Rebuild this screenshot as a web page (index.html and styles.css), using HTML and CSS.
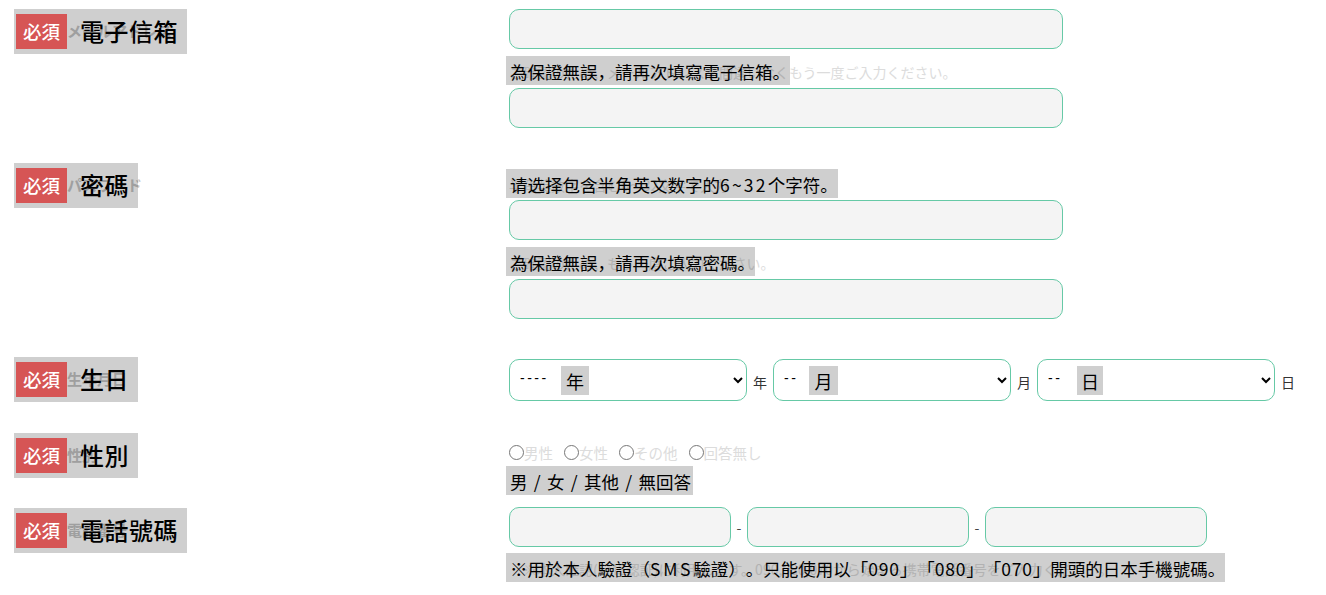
FILE: index.html
```html
<!DOCTYPE html>
<html lang="zh-Hans">
<head>
  <meta charset="UTF-8" />
  <meta name="viewport" content="width=device-width, initial-scale=1.0"/>
  <title>電子信箱</title>
  <link rel="stylesheet" href="styles.css">
</head>
<body>
  <form class="signup">
    <div class="row row-email">
      <div class="label-col">
        <div class="field-label">
          <span class="badge">必須</span>
          <span class="ghost-label" lang="ja">メールアドレス</span>
          <span class="label-text">電子信箱</span>
        </div>
      </div>
      <div class="field-col">
        <input class="text-input" type="text">
        <div class="hint">
          <span class="ghost" lang="ja">ご確認のため、メールアドレスを間違いなくもう一度ご入力ください。</span>
          <span class="trans">為保證無誤，請再次填寫電子信箱。</span>
        </div>
        <input class="text-input" type="text">
      </div>
    </div>

    <div class="row row-password">
      <div class="label-col">
        <div class="field-label">
          <span class="badge">必須</span>
          <span class="ghost-label" lang="ja">パスワード</span>
          <span class="label-text">密碼</span>
        </div>
      </div>
      <div class="field-col">
        <div class="hint hint-first">
          <span class="ghost" lang="ja">半角英数字を含む6〜32文字で入力</span>
          <span class="trans">请选择包含半角英文数字的<span class="range">6~32</span>个字符。</span>
        </div>
        <input class="text-input" type="text">
        <div class="hint">
          <span class="ghost" lang="ja">ご確認のため、もう一度ご入力ください。</span>
          <span class="trans">為保證無誤，請再次填寫密碼。</span>
        </div>
        <input class="text-input" type="text">
      </div>
    </div>

    <div class="row row-birth">
      <div class="label-col">
        <div class="field-label">
          <span class="badge">必須</span>
          <span class="ghost-label" lang="ja">生年月日</span>
          <span class="label-text">生日</span>
        </div>
      </div>
      <div class="field-col date-fields">
        <div class="select-wrap">
          <select class="date-select"><option>----</option></select>
          <span class="select-trans year">年</span>
        </div>
        <span class="unit">年</span>
        <div class="select-wrap">
          <select class="date-select"><option>--</option></select>
          <span class="select-trans month">月</span>
        </div>
        <span class="unit">月</span>
        <div class="select-wrap">
          <select class="date-select"><option>--</option></select>
          <span class="select-trans day">日</span>
        </div>
        <span class="unit">日</span>
      </div>
    </div>

    <div class="row row-gender">
      <div class="label-col">
        <div class="field-label">
          <span class="badge">必須</span>
          <span class="ghost-label" lang="ja">性別</span>
          <span class="label-text">性別</span>
        </div>
      </div>
      <div class="field-col">
        <div class="radios" lang="ja">
          <label class="radio"><input type="radio" name="gender">男性</label>
          <label class="radio"><input type="radio" name="gender">女性</label>
          <label class="radio"><input type="radio" name="gender">その他</label>
          <label class="radio"><input type="radio" name="gender">回答無し</label>
        </div>
        <div class="hint hint-gender">
          <span class="trans">男 / 女 / 其他 / 無回答</span>
        </div>
      </div>
    </div>

    <div class="row row-phone">
      <div class="label-col">
        <div class="field-label">
          <span class="badge">必須</span>
          <span class="ghost-label" lang="ja">電話番号</span>
          <span class="label-text">電話號碼</span>
        </div>
      </div>
      <div class="field-col">
        <div class="phone-fields">
          <input class="text-input" type="text">
          <span class="dash">-</span>
          <input class="text-input" type="text">
          <span class="dash">-</span>
          <input class="text-input" type="text">
        </div>
        <div class="hint hint-phone">
          <span class="ghost" lang="ja">※本人確認(SMS認証)に利用します。090,080,070から始まる携帯電話番号をご入力ください。</span>
          <span class="trans">※用於本人驗證（<span class="sms">SMS</span>驗證）。只能使用以「<span class="num">090</span>」「<span class="num">080</span>」「<span class="num">070</span>」開頭的日本手機號碼。</span>
        </div>
      </div>
    </div>
  </form>
</body>
</html>
```

FILE: styles.css
```css
html, body {
  height: 595px;
  overflow: hidden;
}
body {
  margin: 0;
  padding: 9px 0 0 14px;
  box-sizing: border-box;
  font-family: "Noto Sans CJK SC", "Noto Sans CJK TC", sans-serif;
  text-spacing-trim: space-all;
  color: #000;
  background: #fff;
}
.row {
  display: flex;
  align-items: flex-start;
}
.row-email { margin-bottom: 35px; }
.row-password { margin-bottom: 38px; }
.row-birth { margin-bottom: 31px; }
.row-gender { margin-bottom: 12px; }

.label-col {
  width: 495px;
  flex: none;
}
.field-label {
  position: relative;
  display: inline-flex;
  align-items: center;
  height: 45px;
  padding: 0 9px 0 2px;
  background: rgba(0, 0, 0, 0.19);
  font-size: 24px;
  letter-spacing: 0.5px;
  font-weight: 500;
}
.label-text { padding-bottom: 3px; }
.row-phone .label-col { padding-top: 1px; }
.badge {
  width: 51px;
  height: 35px;
  line-height: 35px;
  margin-right: 13px;
  background: #d65555;
  color: #fff;
  font-size: 18.5px;
  font-weight: 500;
  letter-spacing: 0;
  text-align: center;
}
.ghost-label {
  position: absolute;
  left: 53px;
  top: 12px;
  z-index: -1;
  font-size: 15px;
  line-height: 20px;
  font-weight: 700;
  letter-spacing: 0;
  color: #c4c4c4;
  white-space: nowrap;
}

.field-col {
  display: flex;
  flex-direction: column;
  align-items: flex-start;
}
.text-input {
  display: block;
  box-sizing: border-box;
  width: 554px;
  height: 40px;
  margin: 0;
  padding: 0 10px;
  background: #f4f4f4;
  border: 1px solid #66c9a6;
  border-radius: 10px;
}

.hint {
  position: relative;
  height: 29px;
  margin: 7px 0 3px -3px;
  padding-left: 3px;
}
.hint-first { margin-top: 6px; margin-bottom: 2px; }
.hint-gender { margin: 0 0 0 -3px; }
.hint-gender .trans { word-spacing: 2.4px; padding-right: 2px; }
.hint-phone { margin: 6px 0 0 -3px; }
.ghost {
  font-size: 14px;
  line-height: 32px;
  color: #dcdcdc;
  white-space: nowrap;
}
.trans {
  position: absolute;
  left: 0;
  top: 0;
  height: 29px;
  padding: 0 0 0 4px;
  background: rgba(0, 0, 0, 0.19);
  font-size: 17.5px;
  line-height: 32px;
  white-space: nowrap;
}
.range { letter-spacing: 2.2px; }
.sms { letter-spacing: 2.7px; }
.num { letter-spacing: 0.8px; }

.date-fields {
  flex-direction: row;
  align-items: center;
  padding-top: 2px;
}
.select-wrap {
  position: relative;
  height: 42px;
}
.date-select {
  display: block;
  box-sizing: border-box;
  width: 238px;
  height: 42px;
  margin: 0;
  padding: 0 6px 5px 6px;
  background: #fff;
  border: 1px solid #66c9a6;
  border-radius: 10px;
  font-family: "Liberation Sans", sans-serif;
  font-size: 14px;
  letter-spacing: 2.5px;
  color: #000;
}
.select-trans {
  position: absolute;
  top: 7px;
  height: 29px;
  background: rgba(0, 0, 0, 0.19);
  font-size: 18px;
  line-height: 31px;
  text-align: center;
}
.select-trans.year { left: 52px; width: 28px; }
.select-trans.month { left: 36px; width: 29px; }
.select-trans.day { left: 40px; width: 26px; }
.unit {
  width: 26px;
  padding-top: 4px;
  font-size: 14px;
  color: #333;
  text-align: center;
}

.radios {
  display: flex;
  gap: 11px;
  height: 24px;
  padding-top: 9px;
}
.radio {
  display: flex;
  align-items: center;
  height: 20px;
  font-size: 14.5px;
  color: #dcdcdc;
}
.radio input {
  width: 15px;
  height: 15px;
  margin: 0;
}

.phone-fields {
  display: flex;
  align-items: center;
}
.phone-fields .text-input { width: 222px; }
.dash {
  width: 16px;
  font-size: 14px;
  color: #444;
  text-align: center;
}
.hint-phone .ghost { padding-left: 14px; }
```
